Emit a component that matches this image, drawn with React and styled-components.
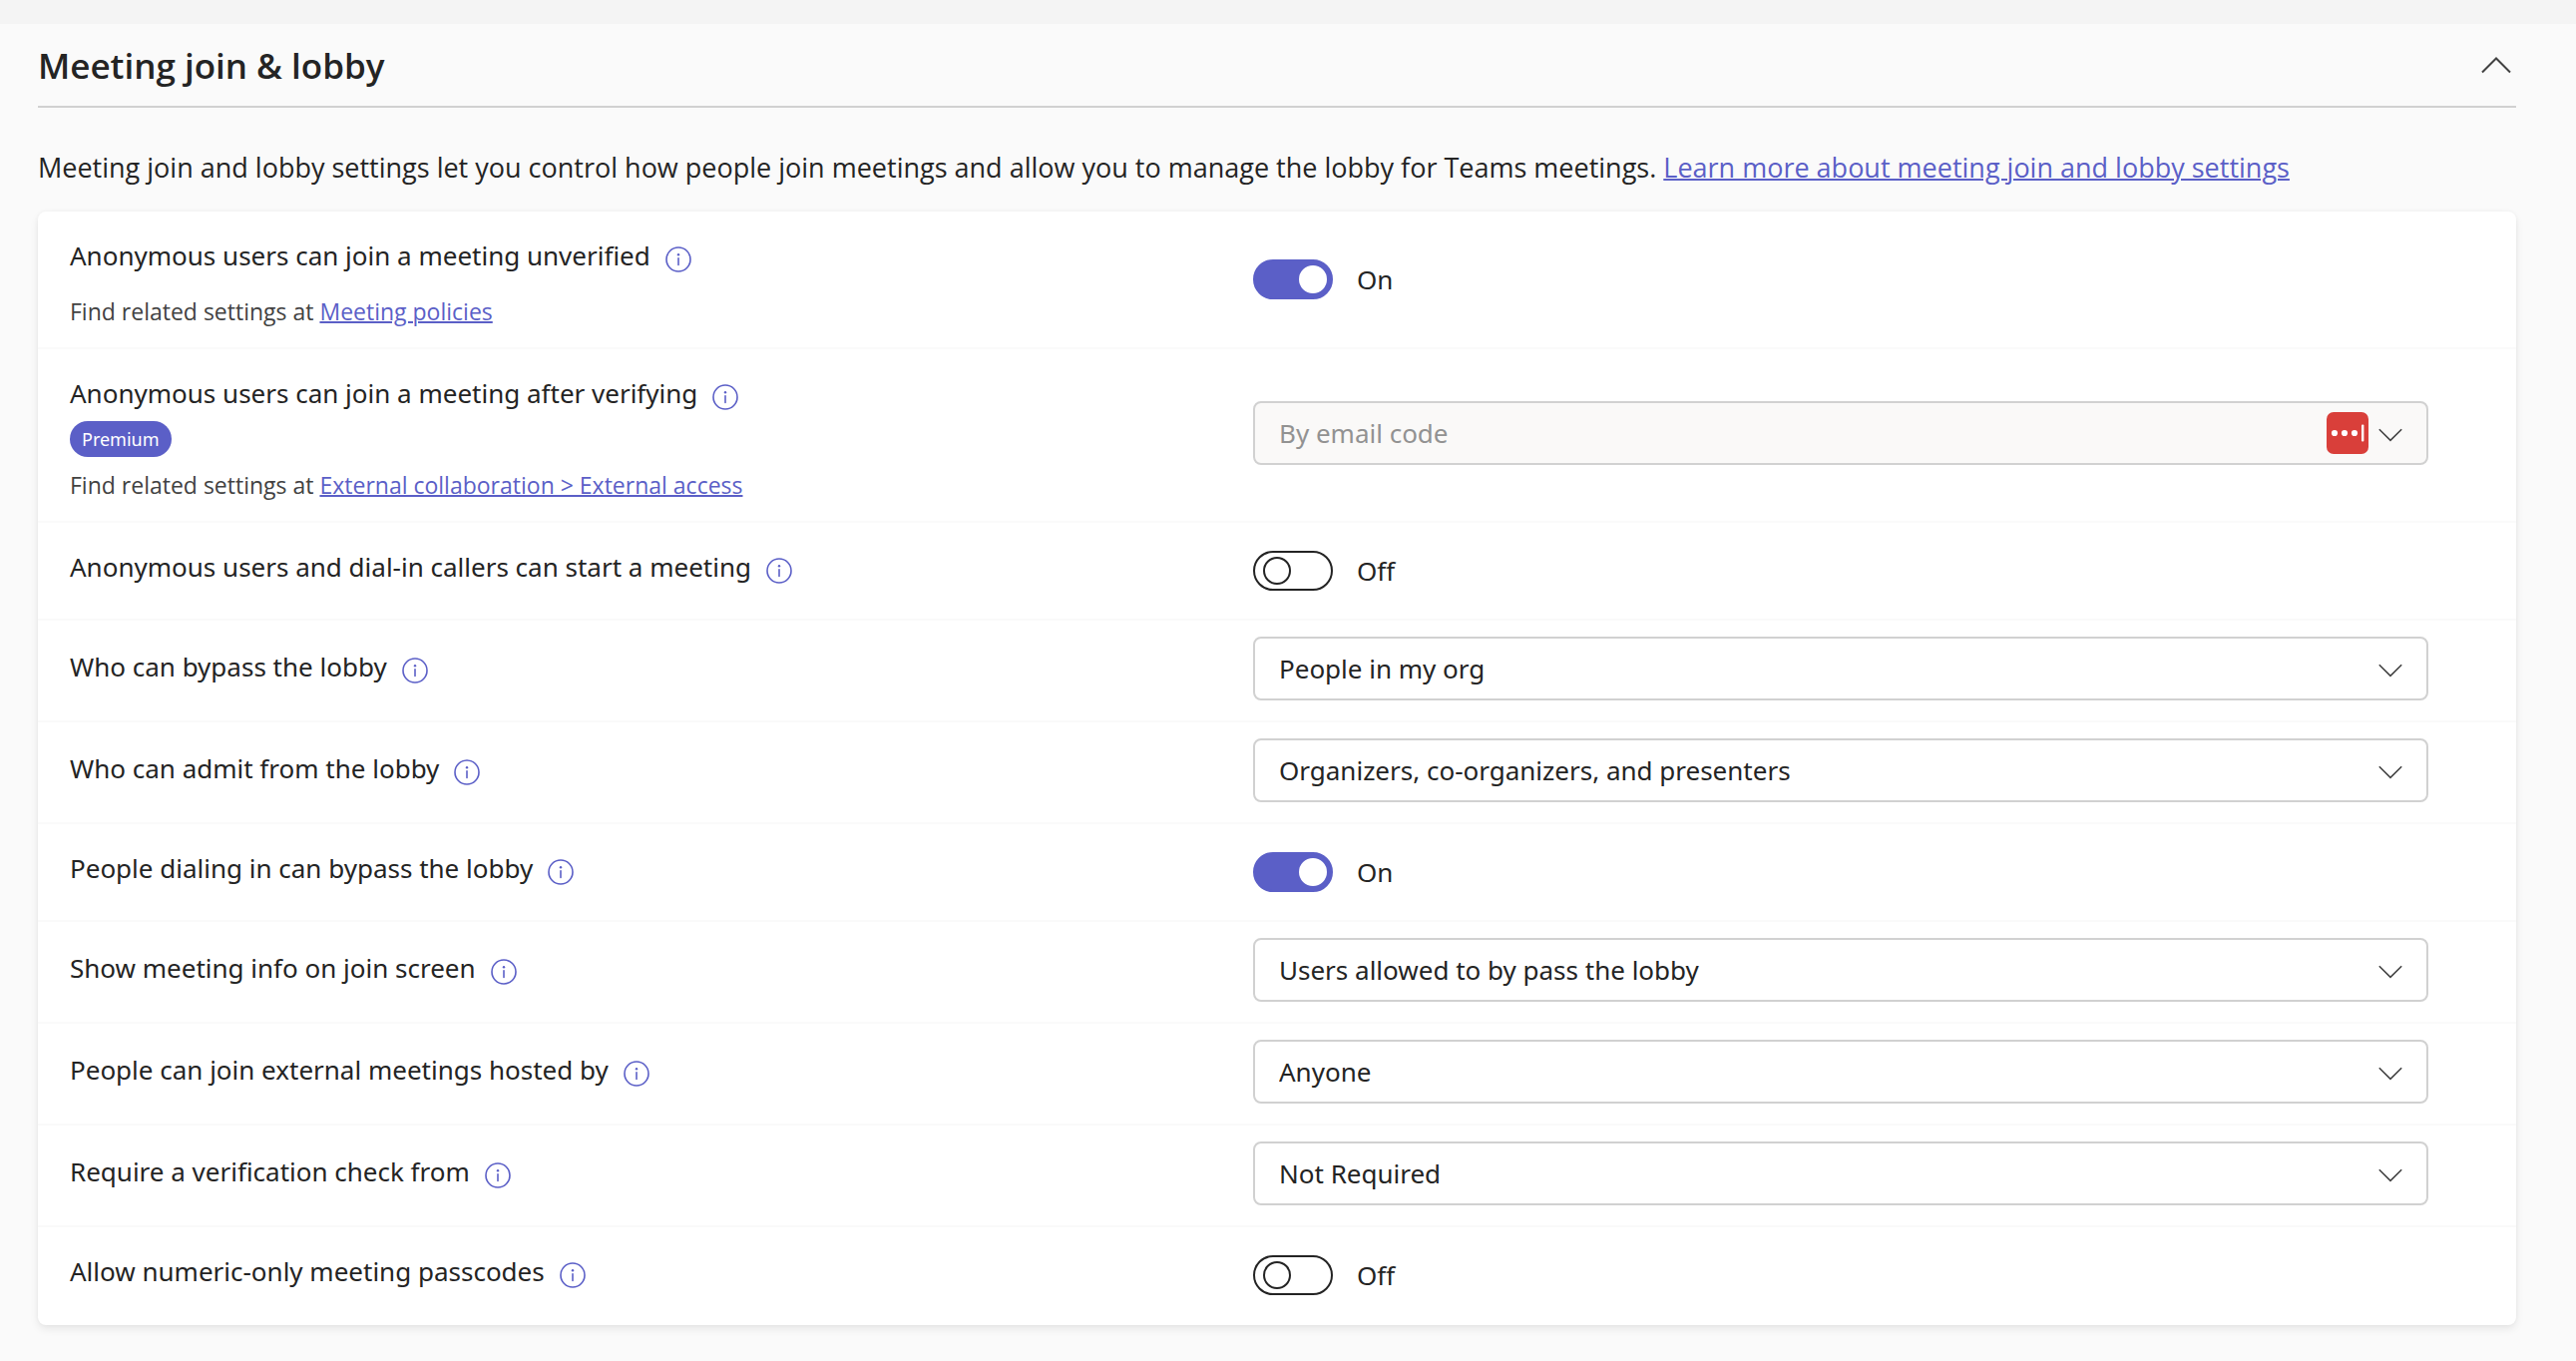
import React, { useState } from 'react';
import styled, { createGlobalStyle } from 'styled-components';

const settings = [
    {
        id: 'anonymous-unverified',
        label: 'Anonymous users can join a meeting unverified',
        related: 'Meeting policies',
        type: 'toggle',
        on: true,
    },
    {
        id: 'anonymous-verified',
        label: 'Anonymous users can join a meeting after verifying',
        badge: 'Premium',
        related: 'External collaboration > External access',
        type: 'select',
        disabled: true,
        options: ['By email code', 'Not allowed'],
    },
    {
        id: 'dial-in-start',
        label: 'Anonymous users and dial-in callers can start a meeting',
        type: 'toggle',
        on: false,
    },
    {
        id: 'bypass-lobby',
        label: 'Who can bypass the lobby',
        type: 'select',
        options: ['People in my org', 'Everyone', 'Only organizers and co-organizers'],
    },
    {
        id: 'admit-lobby',
        label: 'Who can admit from the lobby',
        type: 'select',
        options: ['Organizers, co-organizers, and presenters', 'Organizers and co-organizers'],
    },
    {
        id: 'dialing-bypass',
        label: 'People dialing in can bypass the lobby',
        type: 'toggle',
        on: true,
    },
    {
        id: 'info-join-screen',
        label: 'Show meeting info on join screen',
        type: 'select',
        options: ['Users allowed to by pass the lobby', 'Everyone'],
    },
    {
        id: 'external-meetings',
        label: 'People can join external meetings hosted by',
        type: 'select',
        options: ['Anyone', 'Trusted organizations', 'No one'],
    },
    {
        id: 'verification-check',
        label: 'Require a verification check from',
        type: 'select',
        options: ['Not Required', 'Anonymous users', 'Everyone'],
    },
    {
        id: 'numeric-passcodes',
        label: 'Allow numeric-only meeting passcodes',
        type: 'toggle',
        on: false,
    },
];

function InfoButton({ label }) {
    return (
        <InfoStyled type="button" aria-label={`More about: ${label}`}>
            <svg viewBox="0 0 20 20" width="32" height="32" fill="none" stroke="currentColor">
                <circle cx="10" cy="10" r="7.5"/>
                <path d="M10 9.2v4.2" strokeLinecap="round"/>
                <circle cx="10" cy="7" r="0.75" fill="currentColor" stroke="none"/>
            </svg>
        </InfoStyled>
    );
}

function Toggle({ id, defaultOn }) {
    const [on, setOn] = useState(defaultOn);
    return (
        <ToggleStyled>
            <Switch
                id={id}
                type="checkbox"
                role="switch"
                checked={on}
                onChange={() => setOn(!on)}
            />
            <span>{on ? 'On' : 'Off'}</span>
        </ToggleStyled>
    );
}

function Dropdown({ id, options, disabled }) {
    const [value, setValue] = useState(options[0]);
    return (
        <DropdownStyled>
            <Select id={id} value={value} disabled={disabled} onChange={(e) => setValue(e.target.value)}>
                {options.map((option) => (
                    <option key={option}>{option}</option>
                ))}
            </Select>
            <Adornment>
                {disabled && (
                    <svg viewBox="0 0 42 42" width="42" height="42">
                        <rect width="42" height="42" rx="7" fill="#d93f3a"/>
                        <circle cx="8" cy="21" r="3.1" fill="#fff"/>
                        <circle cx="18" cy="21" r="3.1" fill="#fff"/>
                        <circle cx="28" cy="21" r="3.1" fill="#fff"/>
                        <rect x="35" y="12.5" width="2.4" height="17" rx="1" fill="#fff"/>
                    </svg>
                )}
                <svg viewBox="0 0 24 24" width="24" height="24" fill="none" stroke="#424242" strokeWidth="1.6">
                    <path d="M0.8 8.2 12 19.3 23.2 8.2"/>
                </svg>
            </Adornment>
        </DropdownStyled>
    );
}

function SettingRow({ item }) {
    return (
        <Row>
            <Info>
                <LabelLine $tight={Boolean(item.badge)}>
                    <label htmlFor={item.id}>{item.label}</label>
                    <InfoButton label={item.label}/>
                </LabelLine>
                {item.badge && <Badge>{item.badge}</Badge>}
                {item.related && (
                    <Related>
                        Find related settings at <Link href="#related">{item.related}</Link>
                    </Related>
                )}
            </Info>
            {item.type === 'toggle'
                ? <Toggle id={item.id} defaultOn={item.on}/>
                : <Dropdown id={item.id} options={item.options} disabled={item.disabled}/>}
        </Row>
    );
}

export default function App() {
    const [open, setOpen] = useState(true);
    return (
        <>
            <GlobalStyle/>
            <TopStrip/>
            <Main>
                <Header>
                    <h2>Meeting join &amp; lobby</h2>
                    <CollapseButton
                        type="button"
                        aria-label="Meeting join & lobby"
                        aria-expanded={open}
                        onClick={() => setOpen(!open)}
                    >
                        <svg viewBox="0 0 40 40" width="40" height="40" fill="none" stroke="currentColor" strokeWidth="2">
                            <path d="M6 26.5 20 12.5 34 26.5"/>
                        </svg>
                    </CollapseButton>
                </Header>
                {open && (
                    <>
                        <Description>
                            Meeting join and lobby settings let you control how people join meetings and allow you to manage the lobby for Teams meetings.{' '}
                            <Link href="#learn-more">Learn more about meeting join and lobby settings</Link>
                        </Description>
                        <Card>
                            {settings.map((item) => (
                                <SettingRow key={item.id} item={item}/>
                            ))}
                        </Card>
                    </>
                )}
            </Main>
        </>
    );
}

const GlobalStyle = createGlobalStyle`
    :root{
        --primary-color: #5b5fc7;
        --text-color: #242424;
        --muted-color: #424242;
        --border-color: #d1d1d1;
        --page-color: #fafafa;
        --control-font: "Noto Sans", "Open Sans", sans-serif;
        --copy-font: "Open Sans", "Noto Sans", sans-serif;
    }
    *, *::before{
        box-sizing: border-box;
    }
    body{
        margin: 0;
        background-color: var(--page-color);
        color: var(--text-color);
        font-family: var(--control-font);
        font-size: 26px;
        line-height: 40px;
    }
    button, select, input{
        font: inherit;
        color: inherit;
        margin: 0;
    }
`;

const TopStrip = styled.div`
    height: 24px;
    background-color: #f4f4f4;
`;

const Main = styled.main`
    padding: 0 60px 36px 38px;
`;

const Header = styled.header`
    display: flex;
    align-items: center;
    justify-content: space-between;
    padding: 18px 0 16px;
    border-bottom: 2px solid var(--border-color);
    h2{
        margin: 0;
        font-family: var(--copy-font);
        font-size: 35px;
        font-weight: 600;
        line-height: 48px;
    }
`;

const CollapseButton = styled.button`
    display: flex;
    padding: 0;
    border: 0;
    background: none;
    color: var(--muted-color);
    cursor: pointer;
`;

const Description = styled.p`
    margin: 40px 0 24px;
    font-family: var(--copy-font);
    font-size: 27px;
`;

const Link = styled.a`
    color: var(--primary-color);
    text-decoration: underline;
    text-decoration-thickness: 2px;
`;

const Card = styled.section`
    background-color: #fff;
    border-radius: 8px;
    box-shadow: 0 4px 8px rgba(0, 0, 0, 0.08), 0 0 4px rgba(0, 0, 0, 0.04);
`;

const Row = styled.div`
    display: grid;
    grid-template-columns: 1fr 1fr;
    column-gap: 8px;
    align-items: center;
    padding: 16px 88px 16px 32px;
    border-bottom: 2px solid var(--page-color);
    &:last-child{
        border-bottom-color: transparent;
    }
`;

const Info = styled.div`
    padding-top: 8px;
`;

const LabelLine = styled.div`
    display: flex;
    align-items: flex-end;
    gap: 12px;
    margin-bottom: ${(props) => (props.$tight ? '8px' : '16px')};
`;

const InfoStyled = styled.button`
    display: flex;
    padding: 0;
    border: 0;
    background: none;
    color: var(--primary-color);
    cursor: pointer;
`;

const Badge = styled.div`
    width: fit-content;
    margin-bottom: 8px;
    padding: 0 12px;
    border-radius: 18px;
    background-color: var(--primary-color);
    color: #fff;
    font-size: 18px;
    line-height: 36px;
`;

const Related = styled.div`
    color: var(--muted-color);
    font-family: var(--copy-font);
    font-size: 23px;
`;

const ToggleStyled = styled.div`
    display: flex;
    align-items: center;
    gap: 24px;
    padding: 12px 0;
`;

const Switch = styled.input`
    appearance: none;
    width: 80px;
    height: 40px;
    border: 2px solid var(--text-color);
    border-radius: 20px;
    cursor: pointer;
    &::before{
        content: "";
        display: block;
        width: 28px;
        height: 28px;
        margin: 4px 8px;
        border: 2px solid var(--text-color);
        border-radius: 50%;
    }
    &:checked{
        border-color: var(--primary-color);
        background-color: var(--primary-color);
    }
    &:checked::before{
        margin-left: 44px;
        border-color: #fff;
        background-color: #fff;
    }
`;

const DropdownStyled = styled.div`
    display: grid;
    align-items: center;
    margin-bottom: 4px;
`;

const Select = styled.select`
    grid-area: 1 / 1;
    appearance: none;
    width: 100%;
    height: 64px;
    padding: 0 128px 0 24px;
    border: 2px solid var(--border-color);
    border-radius: 8px;
    background-color: #fff;
    &:disabled{
        background-color: #faf9f8;
        color: #929292;
        opacity: 1;
    }
`;

const Adornment = styled.span`
    grid-area: 1 / 1;
    justify-self: end;
    display: flex;
    align-items: center;
    gap: 10px;
    padding-right: 26px;
    pointer-events: none;
`;
